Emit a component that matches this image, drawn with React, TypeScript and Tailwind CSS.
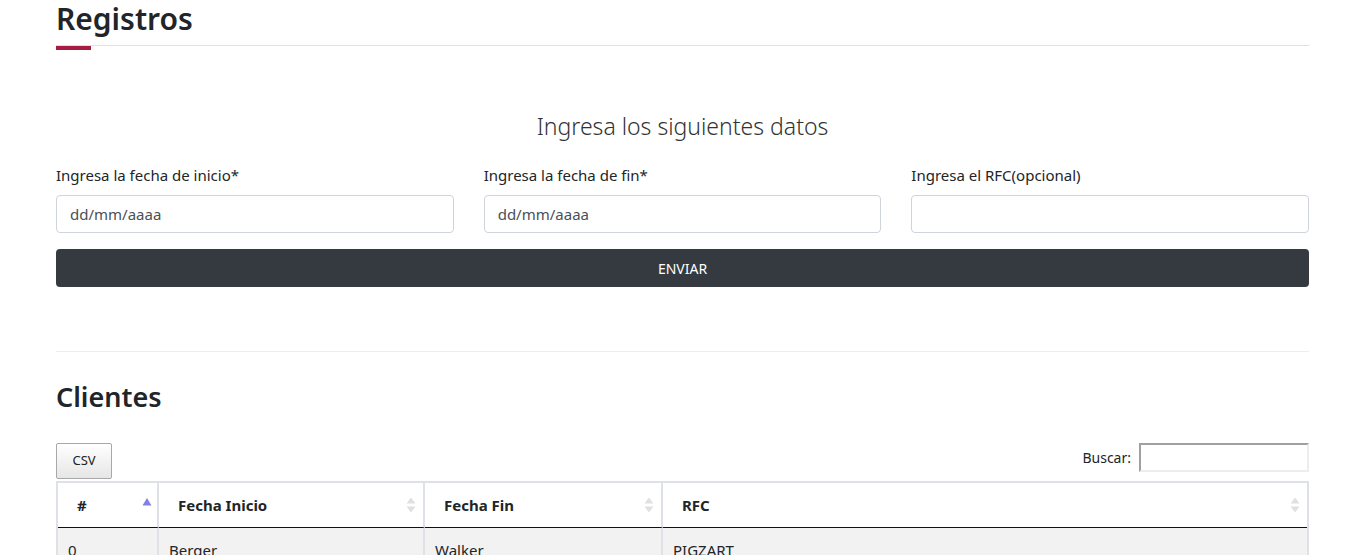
import React from "react";

const SortBoth = () => (
  <svg width="10" height="15" viewBox="0 0 10 15" className="absolute right-[7px] top-1/2 -translate-y-1/2">
    <path d="M5 0 L9.5 6 L0.5 6 Z" fill="#e0e0e0" />
    <path d="M5 15 L9.5 9 L0.5 9 Z" fill="#e0e0e0" />
  </svg>
);

const SortAsc = () => (
  <svg width="10" height="8" viewBox="0 0 10 8" className="absolute right-[5px] top-[15px]">
    <path d="M5 0 L9.5 7.5 L0.5 7.5 Z" fill="#8080e6" />
  </svg>
);

const columns = [
  { name: "#", width: "w-[101px]", asc: true },
  { name: "Fecha Inicio", width: "w-[266px]" },
  { name: "Fecha Fin", width: "w-[238px]" },
  { name: "RFC", width: "" },
];

const rows = [["0", "Berger", "Walker", "PIGZART"]];

export default function App() {
  return (
    <div className="min-h-[555px] bg-white px-[56px] font-['Noto_Sans',sans-serif] text-[#212529]">
      {/* Encabezado */}
      <div className="border-b border-[#dee2e6]">
        <h1 className="h-[45px] pt-[1px] text-[30px] font-semibold leading-[36px]">Registros</h1>
      </div>
      <div className="h-[4px] w-[35px] bg-[#a51e42]" />

      {/* Formulario */}
      <h3 className="mt-[61px] text-center text-[23px] font-light leading-[30px] text-[#333]">
        Ingresa los siguientes datos
      </h3>
      <div className="mt-[22px] grid grid-cols-3 gap-[30px]">
        {[
          { label: "Ingresa la fecha de inicio*", ph: "dd/mm/aaaa" },
          { label: "Ingresa la fecha de fin*", ph: "dd/mm/aaaa" },
          { label: "Ingresa el RFC(opcional)", ph: "" },
        ].map((f) => (
          <div key={f.label}>
            <label className="block text-[15px] leading-[24px]">{f.label}</label>
            <div className="mt-[8px] flex h-[38px] items-center rounded-[4px] border border-[#ced4da] px-[13px] text-[15px] text-[#495057]">
              {f.ph}
            </div>
          </div>
        ))}
      </div>
      <button className="mt-[16px] flex h-[38px] w-full items-center justify-center rounded-[4px] bg-[#343a40] text-[14px] text-white">
        ENVIAR
      </button>

      <div className="mt-[64px] border-t border-[#eceef0]" />

      {/* Clientes */}
      <h2 className="mt-[28px] text-[27px] font-semibold leading-[34px]">Clientes</h2>

      <div className="mt-[29px] flex items-start justify-between">
        <button className="h-[36px] w-[56px] rounded-[2px] border border-[#a8a8a8] bg-gradient-to-b from-white to-[#e6e6e6] text-[13px] text-[#222]">
          CSV
        </button>
        <div className="flex items-center gap-[8px] text-[14px]">
          <span>Buscar:</span>
          <div className="h-[29px] w-[170px] border-2 border-t-[#a0a0a0] border-l-[#a0a0a0] border-r-[#ededed] border-b-[#ededed] bg-white" />
        </div>
      </div>

      <table className="mt-[2px] w-full table-fixed border-separate border-spacing-0 border-2 border-[#dee2e6]">
        <thead>
          <tr>
            {columns.map((c, i) => (
              <th
                key={c.name}
                className={`relative h-[45px] border-b border-b-[#111] pl-[19px] text-left text-[15px] font-bold ${c.width} ${
                  i < columns.length - 1 ? "border-r-2 border-r-[#dee2e6]" : ""
                }`}
              >
                {c.name}
                {c.asc ? <SortAsc /> : <SortBoth />}
              </th>
            ))}
          </tr>
        </thead>
        <tbody>
          {rows.map((r) => (
            <tr key={r[0]} className="bg-[#f2f2f2]">
              {r.map((v, i) => (
                <td
                  key={i}
                  className={`h-[45px] px-[10px] text-[15px] ${
                    i < r.length - 1 ? "border-r-2 border-r-[#dee2e6]" : ""
                  }`}
                >
                  {v}
                </td>
              ))}
            </tr>
          ))}
        </tbody>
      </table>
    </div>
  );
}
